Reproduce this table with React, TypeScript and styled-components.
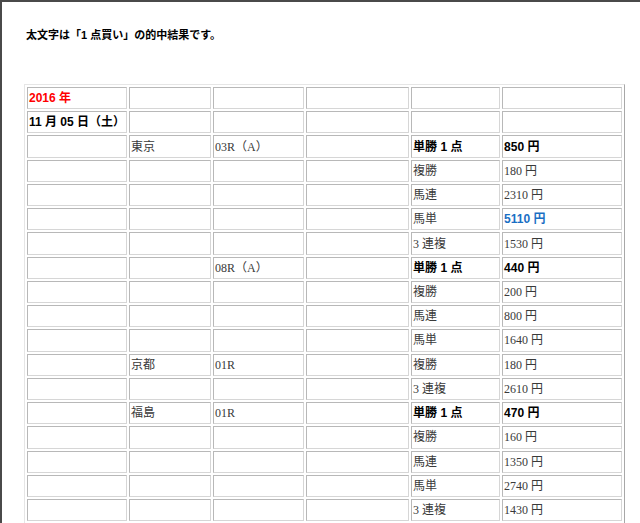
import React from "react";
import styled, { createGlobalStyle } from "styled-components";

const Global = createGlobalStyle`
  html, body { margin: 0; padding: 0; background: #fff; }
  body { font-family: "Liberation Serif", "Noto Sans CJK JP", serif; }
`;

const Page = styled.div`
  box-sizing: border-box;
  min-height: 523px;
  border-top: 2px solid #4a4a4a;
  border-left: 2px solid #4a4a4a;
  padding: 24px 0 0 22px;
`;

const Title = styled.p`
  margin: 0 0 0 2px;
  font-family: "Liberation Sans", "Noto Sans CJK JP", sans-serif;
  font-weight: bold;
  font-size: 11px;
  line-height: 18px;
  color: #000;
`;

const Table = styled.table`
  margin-top: 40px;
  border-collapse: separate;
  border-spacing: 2px;
  border: 1px solid;
  border-color: #e6e6e6 #a8a8a8 #a8a8a8 #e6e6e6;
  table-layout: fixed;
`;

type Tone = "plain" | "bold" | "red" | "blue";

const Cell = styled.td<{ $w: number; $tone: Tone }>`
  box-sizing: border-box;
  width: ${(p) => p.$w}px;
  height: 22.24px;
  padding: 0 1px;
  border: 1px solid;
  border-color: #b8b8b8 #d6d6d6 #d6d6d6 #b8b8b8;
  vertical-align: middle;
  font-size: 12px;
  line-height: 14px;
  white-space: nowrap;
  font-family: ${(p) =>
    p.$tone === "plain"
      ? `"Liberation Serif", "Noto Sans CJK JP", serif`
      : `"Liberation Sans", "Noto Sans CJK JP", sans-serif`};
  font-weight: ${(p) => (p.$tone === "plain" ? "normal" : "bold")};
  color: ${(p) =>
    p.$tone === "red" ? "#ff0000" : p.$tone === "blue" ? "#1a6fc4" : p.$tone === "bold" ? "#000" : "#3a3a3a"};
`;

const widths = [96, 82, 91, 103, 89, 120];

type C = string | { t: string; tone: Tone };
const b = (t: string): C => ({ t, tone: "bold" });

const rows: C[][] = [
  [{ t: "2016 年", tone: "red" }, "", "", "", "", ""],
  [b("11 月 05 日（土）"), "", "", "", "", ""],
  ["", "東京", "03R（A）", "", b("単勝 1 点"), b("850 円")],
  ["", "", "", "", "複勝", "180 円"],
  ["", "", "", "", "馬連", "2310 円"],
  ["", "", "", "", "馬単", { t: "5110 円", tone: "blue" }],
  ["", "", "", "", "3 連複", "1530 円"],
  ["", "", "08R（A）", "", b("単勝 1 点"), b("440 円")],
  ["", "", "", "", "複勝", "200 円"],
  ["", "", "", "", "馬連", "800 円"],
  ["", "", "", "", "馬単", "1640 円"],
  ["", "京都", "01R", "", "複勝", "180 円"],
  ["", "", "", "", "3 連複", "2610 円"],
  ["", "福島", "01R", "", b("単勝 1 点"), b("470 円")],
  ["", "", "", "", "複勝", "160 円"],
  ["", "", "", "", "馬連", "1350 円"],
  ["", "", "", "", "馬単", "2740 円"],
  ["", "", "", "", "3 連複", "1430 円"],
  ["", "", "", "", "", ""],
];

export default function App() {
  return (
    <>
      <Global />
      <Page>
        <Title>太文字は「1 点買い」の的中結果です。</Title>
        <Table>
          <tbody>
            {rows.map((r, i) => (
              <tr key={i}>
                {r.map((c, j) => {
                  const t = typeof c === "string" ? c : c.t;
                  const tone: Tone = typeof c === "string" ? "plain" : c.tone;
                  return (
                    <Cell key={j} $w={widths[j]} $tone={tone}>
                      {t}
                    </Cell>
                  );
                })}
              </tr>
            ))}
          </tbody>
        </Table>
      </Page>
    </>
  );
}
